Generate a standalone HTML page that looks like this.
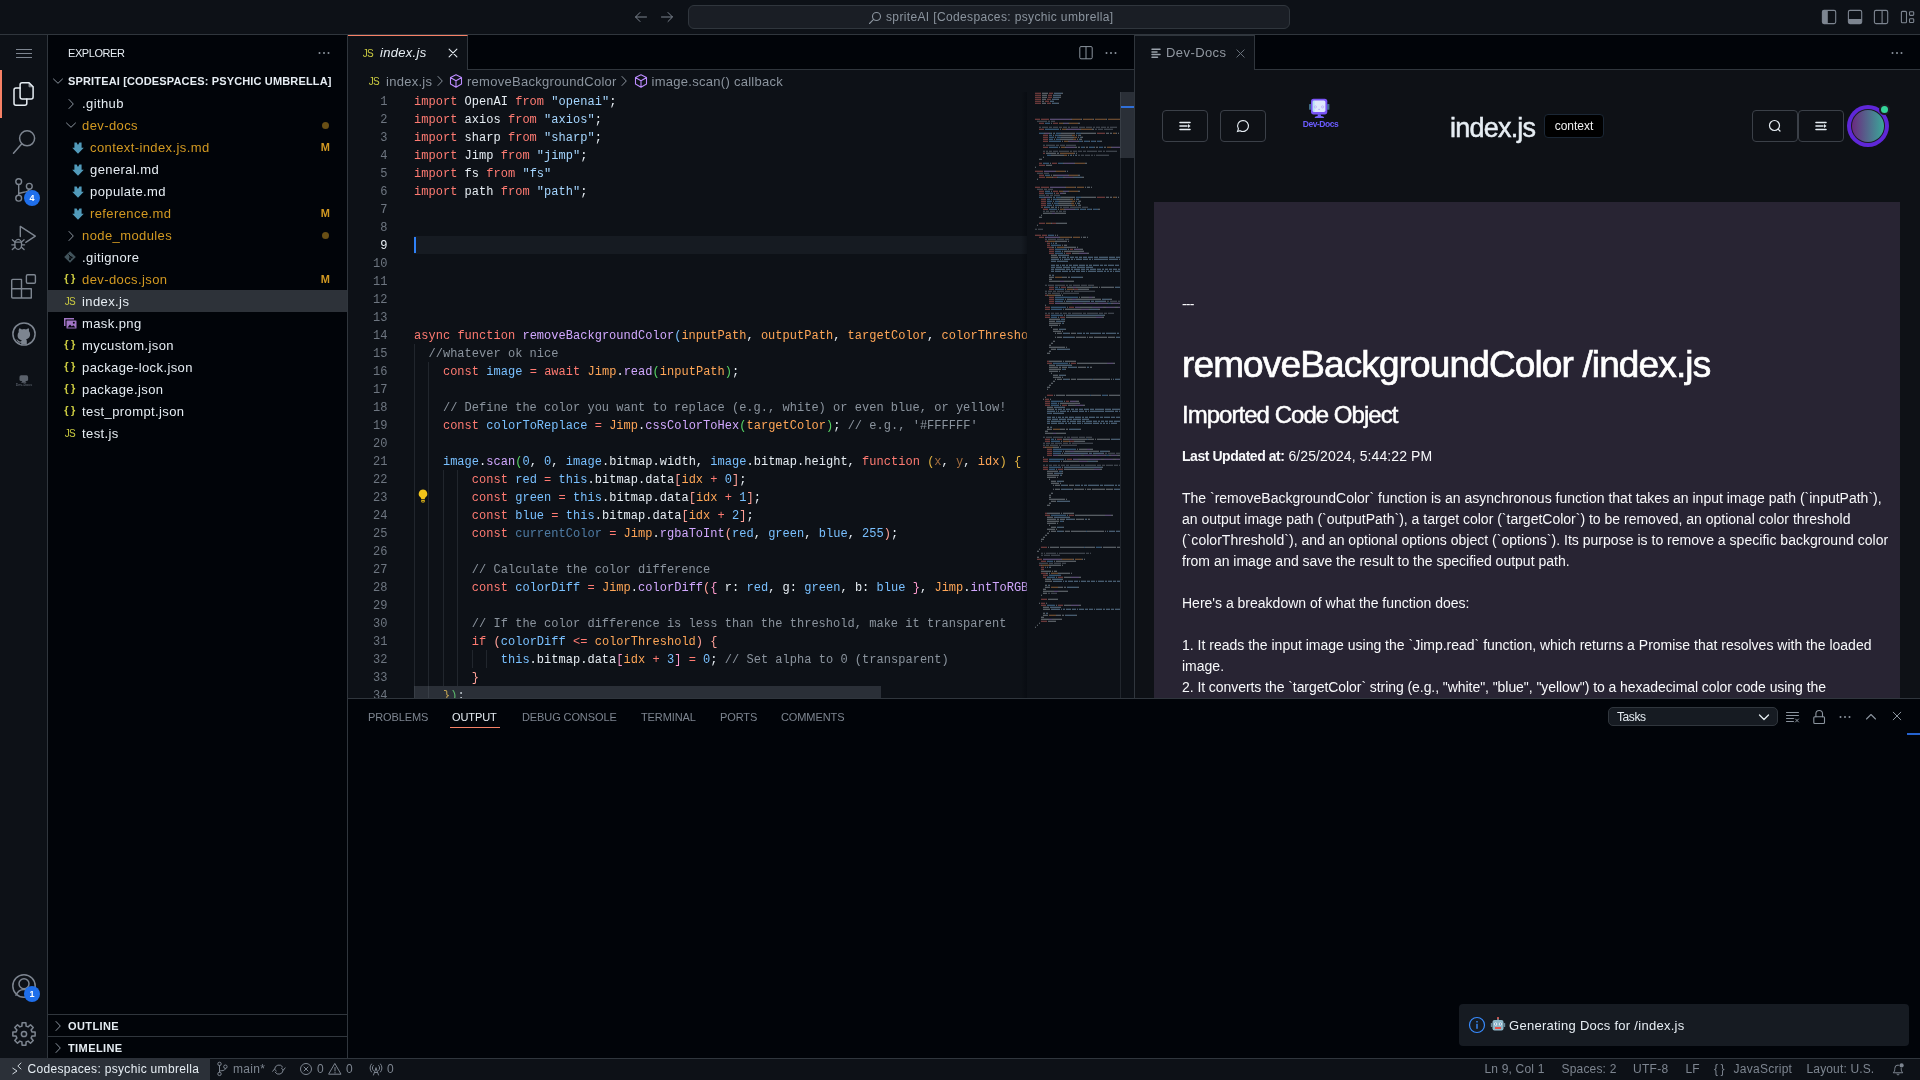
<!DOCTYPE html><html lang="en"><head><meta charset="utf-8"><title>index.js - spriteAI [Codespaces: psychic umbrella]</title><style>
*{box-sizing:border-box;margin:0;padding:0}
html,body{width:1920px;height:1080px;overflow:hidden;background:#0d1117;color:#e6edf3;font-family:"Liberation Sans",sans-serif;font-size:13px;-webkit-font-smoothing:antialiased}
.abs{position:absolute}
#root{position:relative;width:1920px;height:1080px;overflow:hidden;will-change:transform}
svg{display:block;overflow:visible}
/* title */
#title{left:0;top:0;width:1920px;height:35px;background:#0d1117;border-bottom:1px solid #30363d}
#cc{left:688px;top:5px;width:602px;height:24px;border:1px solid #30363d;border-radius:6px;background:#1a1e25}
#cc span{position:absolute;left:197px;top:4px;font-size:12px;letter-spacing:.36px;color:#8b949e;white-space:pre}
/* activity */
#act{left:0;top:35px;width:48px;height:1023px;background:#0d1117;border-right:1px solid #30363d}
.badge{position:absolute;width:16px;height:16px;border-radius:8px;background:#1f6feb;color:#fff;font-size:9px;font-weight:bold;text-align:center;line-height:16px}
/* sidebar */
#side{left:48px;top:35px;width:300px;height:1023px;background:#010409;border-right:1px solid #30363d}
.row{position:absolute;left:0;width:299px;height:22px;line-height:22px;white-space:pre;font-size:13px;letter-spacing:.4px;color:#e6edf3}
.row .t{position:absolute;top:1px}
.row .m{position:absolute;right:17px;top:0;color:#d29922;font-size:11px;font-weight:bold;letter-spacing:0}
.row .dot{position:absolute;left:274px;top:8px;width:7px;height:7px;border-radius:4px;background:#d29922;opacity:.5}
.mod{color:#d29922}
.hdr{font-size:11px;font-weight:bold;letter-spacing:.15px}
.ic{position:absolute}
/* editor */
#tabs{left:348px;top:35px;width:786px;height:35px;background:#010409;border-bottom:1px solid #30363d}
#tab1{left:0;top:0;width:120px;height:35px;background:#0d1117;border-top:1px solid #f78166;border-right:1px solid #30363d}
#tab1 .t{position:absolute;left:32px;top:9px;font-style:italic;font-size:13px;letter-spacing:.3px;white-space:pre}
#bc{left:348px;top:70px;width:786px;height:22px;background:#0d1117;color:#8b949e;font-size:13px;letter-spacing:.28px;line-height:22px;white-space:pre}
#bc span{position:absolute;top:1px}
#ed{left:348px;top:92px;width:786px;height:606px;background:#0d1117;overflow:hidden}
#code{left:66px;top:0;width:613px;height:606px;overflow:hidden}
.ln{position:absolute;left:0;margin-top:1px;width:39.5px;text-align:right;font:12px/18px "Liberation Mono",monospace;color:#6e7681;height:18px}
.cl{position:absolute;left:0;margin-top:1px;letter-spacing:.024px;height:18px;font:12px/18px "Liberation Mono",monospace;white-space:pre;color:#e6edf3}
.k{color:#ff7b72}.s{color:#a5d6ff}.v{color:#79c0ff}.f{color:#d2a8ff}.p{color:#ffa657}.c{color:#8b949e}
.b1{color:#79c0ff}.b2{color:#56d364}.b3{color:#e3b341}.b4{color:#ffa198}.b5{color:#ff9bce}
.dim{opacity:.6}
.g{position:absolute;width:1px;background:#21262d}
/* webview */
#wtabs{left:1135px;top:35px;width:785px;height:35px;background:#010409;border-bottom:1px solid #30363d}
#wtab{left:0;top:0;width:120px;height:35px;background:#0d1117;border-right:1px solid #30363d;border-top:1px solid #30363d}
#wv{left:1135px;top:70px;width:785px;height:628px;background:#0e1116;overflow:hidden}
.btn{position:absolute;height:32px;border:1px solid #3b4048;border-radius:4px}
#card{left:19px;top:132px;width:746px;height:520px;background:#282433}
#card div{position:absolute;left:28px;white-space:pre;color:#f8f9fb}
.body{font-size:14px;line-height:21px}
/* panel */
#panel{left:348px;top:698px;width:1572px;height:360px;background:#010409;border-top:1px solid #30363d}
.pt{position:absolute;top:12px;font-size:11px;color:#7d8590;letter-spacing:-.1px;white-space:pre}
/* status */
#status{left:0;top:1058px;width:1920px;height:22px;background:#0d1117;border-top:1px solid #30363d;color:#7d8590;font-size:12px}
#status .t{position:absolute;top:3px;white-space:pre}
#remote{left:0;top:-1px;width:210px;height:22px;background:#2b3038}

</style></head><body><div id="root">
<div id="title" class="abs">
<svg class="abs" style="left:633px;top:9px" width="16" height="16" viewBox="0 0 16 16" ><path d="M13.5 8H2.8M7 3.5L2.5 8L7 12.5" stroke="#7d8590" stroke-width="1" fill="none" stroke-linecap="round" stroke-linejoin="round" /></svg>
<svg class="abs" style="left:659px;top:9px" width="16" height="16" viewBox="0 0 16 16" ><path d="M2.5 8H13.2M9 3.5L13.5 8L9 12.5" stroke="#7d8590" stroke-width="1" fill="none" stroke-linecap="round" stroke-linejoin="round" /></svg>
<div id="cc" class="abs">
<svg class="abs" style="left:178px;top:4px" width="16" height="16" viewBox="0 0 16 16" ><circle cx="9.5" cy="6.5" r="4" stroke="#8b949e" fill="none" stroke-width="1.1"/><path d="M6.6 9.4L2.5 13.5" stroke="#8b949e" stroke-width="1.1" fill="none" stroke-linecap="round" stroke-linejoin="round" /></svg>
<span>spriteAI [Codespaces: psychic umbrella]</span></div>
<svg class="abs" style="left:1821px;top:9px" width="16" height="16" viewBox="0 0 16 16" ><rect x="1.4" y="1.4" width="13.3" height="13.2" rx="1.6" stroke="#7d8590" fill="none" stroke-width="1.1"/><path d="M1.4 3a1.6 1.6 0 0 1 1.6-1.6h3.8v13.2H3a1.6 1.6 0 0 1-1.6-1.6z" fill="#7d8590"/></svg>
<svg class="abs" style="left:1847px;top:9px" width="16" height="16" viewBox="0 0 16 16" ><rect x="1.4" y="1.4" width="13.3" height="13.2" rx="1.6" stroke="#7d8590" fill="none" stroke-width="1.1"/><path d="M1.4 10h13.3v3a1.6 1.6 0 0 1-1.6 1.6H3a1.6 1.6 0 0 1-1.6-1.6z" fill="#7d8590"/></svg>
<svg class="abs" style="left:1873px;top:9px" width="16" height="16" viewBox="0 0 16 16" ><rect x="1.4" y="1.4" width="13.3" height="13.2" rx="1.6" stroke="#7d8590" fill="none" stroke-width="1.1"/><path d="M9.1 1.4V14.6" stroke="#7d8590" stroke-width="1.1"/></svg>
<svg class="abs" style="left:1899px;top:9px" width="16" height="16" viewBox="0 0 16 16" ><rect x="2.4" y="2.4" width="5.1" height="11.3" rx="1" stroke="#7d8590" fill="none" stroke-width="1.1"/><rect x="10.5" y="2.8" width="4.2" height="3.6" rx=".8" stroke="#7d8590" fill="none" stroke-width="1.1"/><rect x="10.5" y="9.7" width="4.2" height="3.8" rx=".8" stroke="#7d8590" fill="none" stroke-width="1.1"/></svg>
</div>
<div id="act" class="abs"></div>
<div class="abs" style="left:0;top:70px;width:2px;height:48px;background:#f78166"></div>
<svg class="abs" style="left:0px;top:0px" width="48" height="1080" viewBox="0 0 48 1080" ><path d="M16 49.5h16M16 53.5h16M16 57.5h16" stroke="#7d8590" stroke-width="1"/><path d="M22.1 82.7h6.9l4.1 4.1v10.3a2 2 0 0 1-2 2h-9a2 2 0 0 1-2-2v-12.4a2 2 0 0 1 2-2z" stroke="#e6edf3" stroke-width="1.5" fill="none" stroke-linecap="round" stroke-linejoin="round" /><path d="M29 82.7v4.1h4.1z" fill="#e6edf3" opacity=".55" stroke="#e6edf3" stroke-width="1" stroke-linejoin="round"/><path d="M20.1 88h-4.1a2 2 0 0 0-2 2v13.3a2 2 0 0 0 2 2h8.8a2 2 0 0 0 2-2v-4.2" stroke="#e6edf3" stroke-width="1.5" fill="none" stroke-linecap="round" stroke-linejoin="round" /><circle cx="27.1" cy="138.3" r="7.5" stroke="#7d8590" stroke-width="1.5" fill="none"/><path d="M21.6 144L13.5 153.3" stroke="#7d8590" stroke-width="1.5" fill="none" stroke-linecap="round" stroke-linejoin="round" /><circle cx="18.7" cy="181.6" r="2.9" stroke="#7d8590" stroke-width="1.4" fill="none"/><circle cx="29.3" cy="186.3" r="2.9" stroke="#7d8590" stroke-width="1.4" fill="none"/><circle cx="18.7" cy="198.2" r="2.9" stroke="#7d8590" stroke-width="1.4" fill="none"/><path d="M18.7 184.5V195.3M29.3 189.2c0 3.2-6.5 2.6-10.6 4.4" stroke="#7d8590" stroke-width="1.4" fill="none" stroke-linecap="round" stroke-linejoin="round" /><path d="M20.3 236.5V226.4L35.3 236.2L25.8 242.4" stroke="#7d8590" stroke-width="1.4" fill="none" stroke-linecap="round" stroke-linejoin="round" /><ellipse cx="18.2" cy="244.4" rx="3.4" ry="5" stroke="#7d8590" stroke-width="1.4" fill="none"/><path d="M14.8 242.2h6.8M14.9 242l-2.6-2.2M14.8 244.8h-3M14.9 247.2l-2.6 2.4M21.5 242l2.6-2.2M21.6 244.8h3M21.5 247.2l2.6 2.4" stroke="#7d8590" stroke-width="1.3" fill="none" stroke-linecap="round" stroke-linejoin="round" /><path d="M13.7 279.4h7.8v9.3h9.8v9.3h-18.6a1 1 0 0 1-1-1v-16.6a1 1 0 0 1 1-1zM12.7 288.7h8.8v9.3" stroke="#7d8590" stroke-width="1.4" fill="none" stroke-linecap="round" stroke-linejoin="round" /><rect x="26.4" y="274.7" width="9" height="8.6" rx="1.2" stroke="#7d8590" stroke-width="1.4" fill="none"/></svg>
<svg class="abs" style="left:12px;top:322px" width="24" height="24" viewBox="0 0 24 24" ><circle cx="12" cy="12" r="11.1" stroke="#7d8590" stroke-width="1.5" fill="none"/><path d="M 7.3 6.2 c 0.9 0.1 1.9 0.7 2.5 1.2 a 8 8 0 0 1 4.4 0 c 0.6 -0.5 1.6 -1.1 2.5 -1.2 c 0.5 1.2 0.4 2.3 0.2 2.9 c 0.8 0.9 1.2 1.9 1.2 3.1 c 0 3.3 -2 4.5 -4 4.9 c 0.5 0.5 0.7 1.2 0.7 2.1 v 3.1 h -5.6 v -1.6 c -2.5 0.5 -3.4 -0.8 -3.9 -1.9 c -0.3 -0.6 -0.8 -1 -1.3 -1.3 c 0.9 -0.3 1.7 0.2 2.3 1 c 0.7 1 1.7 1.2 2.9 0.8 c 0.1 -0.5 0.3 -0.9 0.6 -1.2 c -2.2 -0.4 -4.2 -1.5 -4.2 -4.9 c 0 -1.2 0.4 -2.2 1.2 -3.1 c -0.2 -0.6 -0.3 -1.7 0.2 -2.9 z" fill="#7d8590"/></svg>
<svg class="abs" style="left:0px;top:0px" width="48" height="1080" viewBox="0 0 48 1080" ><rect x="19.5" y="375.3" width="8.6" height="5.8" rx="1.6" fill="#6e7681" opacity=".8"/><path d="M22.3 381h3l1.2 1.7h-5.4z" fill="#6e7681" opacity=".8"/></svg>
<div class="abs" style="left:12px;top:382px;width:24px;text-align:center;font-size:3.6px;line-height:6px;color:#6e7681;font-weight:bold;opacity:.7">Dev-Docs</div>
<div class="badge" style="left:24px;top:190px">4</div>
<svg class="abs" style="left:0px;top:0px" width="48" height="1080" viewBox="0 0 48 1080" ><circle cx="24" cy="986" r="11.2" stroke="#7d8590" stroke-width="1.5" fill="none"/><circle cx="24" cy="983.8" r="5" stroke="#7d8590" stroke-width="1.5" fill="none"/><path d="M16 995.2c1.5-3.6 4.5-5.8 8-5.8s6.5 2.2 8 5.8" stroke="#7d8590" stroke-width="1.5" fill="none" stroke-linecap="round" stroke-linejoin="round" /><path d="M22.09 1022.86L25.91 1022.86L26.11 1026.08L28.11 1026.91L30.52 1024.77L33.23 1027.48L31.09 1029.89L31.92 1031.89L35.14 1032.09L35.14 1035.91L31.92 1036.11L31.09 1038.11L33.23 1040.52L30.52 1043.23L28.11 1041.09L26.11 1041.92L25.91 1045.14L22.09 1045.14L21.89 1041.92L19.89 1041.09L17.48 1043.23L14.77 1040.52L16.91 1038.11L16.08 1036.11L12.86 1035.91L12.86 1032.09L16.08 1031.89L16.91 1029.89L14.77 1027.48L17.48 1024.77L19.89 1026.91L21.89 1026.08z" stroke="#7d8590" stroke-width="1.5" fill="none" stroke-linecap="round" stroke-linejoin="round" /><circle cx="24" cy="1034" r="2.6" stroke="#7d8590" stroke-width="1.5" fill="none"/></svg>
<div class="badge" style="left:24px;top:986px">1</div>
<div id="side" class="abs">
<div class="abs" style="left:20px;top:12px;font-size:11px;letter-spacing:-.42px;color:#e6edf3">EXPLORER</div>
<svg class="abs" style="left:268px;top:10px" width="16" height="16" viewBox="0 0 16 16" ><circle cx="3.5" cy="8" r="1" fill="#8b949e"/><circle cx="8" cy="8" r="1" fill="#8b949e"/><circle cx="12.5" cy="8" r="1" fill="#8b949e"/></svg>
<div class="row hdr" style="top:35px"><svg class="abs" style="left:2px;top:3px" width="16" height="16" viewBox="0 0 16 16" ><path d="M3.5 6L8 10.3L12.5 6" stroke="#8b949e" stroke-width="1" fill="none" stroke-linecap="round" stroke-linejoin="round" /></svg><span class="t" style="left:20px;top:0">SPRITEAI [CODESPACES: PSYCHIC UMBRELLA]</span></div>
<div class="row" style="top:57px;"><svg class="abs" style="left:15.3px;top:3.7px" width="16" height="16" viewBox="0 0 16 16" ><path d="M6 3.5L10.3 8L6 12.5" stroke="#8b949e" stroke-width="1" fill="none" stroke-linecap="round" stroke-linejoin="round" /></svg><span class="t " style="left:34px">.github</span></div>
<div class="row" style="top:79px;"><svg class="abs" style="left:15.2px;top:3px" width="16" height="16" viewBox="0 0 16 16" ><path d="M3.5 6L8 10.3L12.5 6" stroke="#8b949e" stroke-width="1" fill="none" stroke-linecap="round" stroke-linejoin="round" /></svg><span class="t mod" style="left:34px">dev-docs</span><span class="dot"></span></div>
<div class="row" style="top:101px;"><svg class="abs" style="left:22.2px;top:3.6px" width="16" height="16" viewBox="0 0 16 16" ><path d="M4.4 2.5h2.2l1.4 2.4 1.4-2.4h2.2v5.2h2.2L8 13.8 2.2 7.7h2.2z" fill="#519aba"/></svg><span class="t mod" style="left:42px">context-index.js.md</span><span class="m">M</span></div>
<div class="row" style="top:123px;"><svg class="abs" style="left:22.2px;top:3.6px" width="16" height="16" viewBox="0 0 16 16" ><path d="M4.4 2.5h2.2l1.4 2.4 1.4-2.4h2.2v5.2h2.2L8 13.8 2.2 7.7h2.2z" fill="#519aba"/></svg><span class="t " style="left:42px">general.md</span></div>
<div class="row" style="top:145px;"><svg class="abs" style="left:22.2px;top:3.6px" width="16" height="16" viewBox="0 0 16 16" ><path d="M4.4 2.5h2.2l1.4 2.4 1.4-2.4h2.2v5.2h2.2L8 13.8 2.2 7.7h2.2z" fill="#519aba"/></svg><span class="t " style="left:42px">populate.md</span></div>
<div class="row" style="top:167px;"><svg class="abs" style="left:22.2px;top:3.6px" width="16" height="16" viewBox="0 0 16 16" ><path d="M4.4 2.5h2.2l1.4 2.4 1.4-2.4h2.2v5.2h2.2L8 13.8 2.2 7.7h2.2z" fill="#519aba"/></svg><span class="t mod" style="left:42px">reference.md</span><span class="m">M</span></div>
<div class="row" style="top:189px;"><svg class="abs" style="left:15.3px;top:3.7px" width="16" height="16" viewBox="0 0 16 16" ><path d="M6 3.5L10.3 8L6 12.5" stroke="#8b949e" stroke-width="1" fill="none" stroke-linecap="round" stroke-linejoin="round" /></svg><span class="t mod" style="left:34px">node_modules</span><span class="dot"></span></div>
<div class="row" style="top:211px;"><svg class="abs" style="left:13.8px;top:2.7px" width="16" height="16" viewBox="0 0 16 16" ><path d="M8 2.2L13.8 8L8 13.8L2.2 8z" fill="#41535b"/><path d="M6.5 5.5l2.8 2.8M8 7v3" stroke="#010409" stroke-width="1"/><circle cx="8" cy="10.2" r="1" fill="#010409"/><circle cx="9.6" cy="8.4" r="1" fill="#010409"/></svg><span class="t " style="left:34px">.gitignore</span></div>
<div class="row" style="top:233px;"><span class="abs" style="left:16.2px;top:3px;font:bold 11px/15px 'Liberation Sans',sans-serif;color:#cbcb41;letter-spacing:2.6px;width:16px;height:16px">{}</span><span class="t mod" style="left:34px">dev-docs.json</span><span class="m">M</span></div>
<div class="row" style="top:255px;background:#2d3239;"><span class="abs" style="left:16.8px;top:4px;font:10px/16px 'Liberation Sans',sans-serif;color:#cbcb41;letter-spacing:-.8px;width:16px;height:16px">JS</span><span class="t " style="left:34px">index.js</span></div>
<div class="row" style="top:277px;"><svg class="abs" style="left:13.7px;top:2.7px" width="16" height="16" viewBox="0 0 16 16" ><path d="M2 3h10v1.5H3.5V11H2z" fill="#a074c4"/><rect x="4.5" y="5.5" width="10" height="8" rx=".5" fill="#a074c4"/><path d="M5.5 12.5l2.5-3 1.8 2 1.5-1.2 2.2 2.2z" fill="#010409"/><circle cx="11.8" cy="7.8" r="1" fill="#010409"/></svg><span class="t " style="left:34px">mask.png</span></div>
<div class="row" style="top:299px;"><span class="abs" style="left:16.2px;top:3px;font:bold 11px/15px 'Liberation Sans',sans-serif;color:#cbcb41;letter-spacing:2.6px;width:16px;height:16px">{}</span><span class="t " style="left:34px">mycustom.json</span></div>
<div class="row" style="top:321px;"><span class="abs" style="left:16.2px;top:3px;font:bold 11px/15px 'Liberation Sans',sans-serif;color:#cbcb41;letter-spacing:2.6px;width:16px;height:16px">{}</span><span class="t " style="left:34px">package-lock.json</span></div>
<div class="row" style="top:343px;"><span class="abs" style="left:16.2px;top:3px;font:bold 11px/15px 'Liberation Sans',sans-serif;color:#cbcb41;letter-spacing:2.6px;width:16px;height:16px">{}</span><span class="t " style="left:34px">package.json</span></div>
<div class="row" style="top:365px;"><span class="abs" style="left:16.2px;top:3px;font:bold 11px/15px 'Liberation Sans',sans-serif;color:#cbcb41;letter-spacing:2.6px;width:16px;height:16px">{}</span><span class="t " style="left:34px">test_prompt.json</span></div>
<div class="row" style="top:387px;"><span class="abs" style="left:16.8px;top:4px;font:10px/16px 'Liberation Sans',sans-serif;color:#cbcb41;letter-spacing:-.8px;width:16px;height:16px">JS</span><span class="t " style="left:34px">test.js</span></div>
<div class="abs" style="left:0;top:979px;width:299px;height:1px;background:#30363d"></div>
<div class="row hdr" style="top:980px"><svg class="abs" style="left:2px;top:3px" width="16" height="16" viewBox="0 0 16 16" ><path d="M6 3.5L10.3 8L6 12.5" stroke="#8b949e" stroke-width="1" fill="none" stroke-linecap="round" stroke-linejoin="round" /></svg><span class="t" style="left:20px;top:0;letter-spacing:.4px">OUTLINE</span></div>
<div class="abs" style="left:0;top:1001px;width:299px;height:1px;background:#30363d"></div>
<div class="row hdr" style="top:1002px"><svg class="abs" style="left:2px;top:3px" width="16" height="16" viewBox="0 0 16 16" ><path d="M6 3.5L10.3 8L6 12.5" stroke="#8b949e" stroke-width="1" fill="none" stroke-linecap="round" stroke-linejoin="round" /></svg><span class="t" style="left:20px;top:0;letter-spacing:.4px">TIMELINE</span></div>
</div>
<div id="tabs" class="abs"><div id="tab1" class="abs">
<span class="abs" style="left:14.8px;top:10px;font:10px/16px 'Liberation Sans',sans-serif;color:#cbcb41;letter-spacing:-.8px;width:16px;height:16px">JS</span>
<span class="t">index.js</span>
<svg class="abs" style="left:97px;top:9px" width="16" height="16" viewBox="0 0 16 16" ><path d="M4.1 4.1L11.9 11.9M11.9 4.1L4.1 11.9" stroke="#e6edf3" stroke-width="1.1" fill="none" stroke-linecap="round" stroke-linejoin="round" /></svg>
</div>
<svg class="abs" style="left:729.5px;top:10px" width="16" height="16" viewBox="0 0 16 16" ><rect x="1.8" y="1.6" width="12.4" height="12.2" rx="1.2" stroke="#8b949e" fill="none"/><path d="M8 1.6V13.8" stroke="#8b949e"/></svg>
<svg class="abs" style="left:755px;top:10px" width="16" height="16" viewBox="0 0 16 16" ><circle cx="3.5" cy="8" r="1" fill="#8b949e"/><circle cx="8" cy="8" r="1" fill="#8b949e"/><circle cx="12.5" cy="8" r="1" fill="#8b949e"/></svg>
</div>
<div id="bc" class="abs">
<span class="abs" style="left:20.8px;top:4px;font:10px/16px 'Liberation Sans',sans-serif;color:#cbcb41;letter-spacing:-.8px;width:16px;height:16px">JS</span>
<span style="left:38px">index.js</span>
<svg class="abs" style="left:84px;top:3px" width="16" height="16" viewBox="0 0 16 16" ><path d="M6 3.5L10.3 8L6 12.5" stroke="#8b949e" stroke-width="1" fill="none" stroke-linecap="round" stroke-linejoin="round" /></svg>
<svg class="abs" style="left:100px;top:3px" width="16" height="16" viewBox="0 0 16 16" ><path d="M8 1.8L13.5 4.6V11L8 14.2L2.5 11V4.6zM2.7 4.8L8 7.8L13.3 4.8M8 7.8V14" stroke="#bc8cff" stroke-width="1.1" fill="none" stroke-linecap="round" stroke-linejoin="round" /></svg>
<span style="left:119px">removeBackgroundColor</span>
<svg class="abs" style="left:268px;top:3px" width="16" height="16" viewBox="0 0 16 16" ><path d="M6 3.5L10.3 8L6 12.5" stroke="#8b949e" stroke-width="1" fill="none" stroke-linecap="round" stroke-linejoin="round" /></svg>
<svg class="abs" style="left:285px;top:3px" width="16" height="16" viewBox="0 0 16 16" ><path d="M8 1.8L13.5 4.6V11L8 14.2L2.5 11V4.6zM2.7 4.8L8 7.8L13.3 4.8M8 7.8V14" stroke="#bc8cff" stroke-width="1.1" fill="none" stroke-linecap="round" stroke-linejoin="round" /></svg>
<span style="left:303.5px">image.scan() callback</span>
</div>
<div id="ed" class="abs">
<div class="abs" style="left:66px;top:144px;width:613px;height:18px;background:#161b22"></div>
<div class="abs" style="left:66px;top:145px;width:2px;height:16px;background:#2f81f7"></div>
<div class="ln" style="top:0px;">1</div>
<div class="ln" style="top:18px;">2</div>
<div class="ln" style="top:36px;">3</div>
<div class="ln" style="top:54px;">4</div>
<div class="ln" style="top:72px;">5</div>
<div class="ln" style="top:90px;">6</div>
<div class="ln" style="top:108px;">7</div>
<div class="ln" style="top:126px;">8</div>
<div class="ln" style="top:144px;color:#e6edf3">9</div>
<div class="ln" style="top:162px;">10</div>
<div class="ln" style="top:180px;">11</div>
<div class="ln" style="top:198px;">12</div>
<div class="ln" style="top:216px;">13</div>
<div class="ln" style="top:234px;">14</div>
<div class="ln" style="top:252px;">15</div>
<div class="ln" style="top:270px;">16</div>
<div class="ln" style="top:288px;">17</div>
<div class="ln" style="top:306px;">18</div>
<div class="ln" style="top:324px;">19</div>
<div class="ln" style="top:342px;">20</div>
<div class="ln" style="top:360px;">21</div>
<div class="ln" style="top:378px;">22</div>
<div class="ln" style="top:396px;">23</div>
<div class="ln" style="top:414px;">24</div>
<div class="ln" style="top:432px;">25</div>
<div class="ln" style="top:450px;">26</div>
<div class="ln" style="top:468px;">27</div>
<div class="ln" style="top:486px;">28</div>
<div class="ln" style="top:504px;">29</div>
<div class="ln" style="top:522px;">30</div>
<div class="ln" style="top:540px;">31</div>
<div class="ln" style="top:558px;">32</div>
<div class="ln" style="top:576px;">33</div>
<div class="ln" style="top:594px;">34</div>
<div id="code" class="abs">
<div class="g" style="left:0.0px;top:252px;height:18px"></div>
<div class="g" style="left:0.0px;top:270px;height:18px"></div>
<div class="g" style="left:14.4px;top:270px;height:18px"></div>
<div class="g" style="left:0.0px;top:288px;height:18px"></div>
<div class="g" style="left:14.4px;top:288px;height:18px"></div>
<div class="g" style="left:0.0px;top:306px;height:18px"></div>
<div class="g" style="left:14.4px;top:306px;height:18px"></div>
<div class="g" style="left:0.0px;top:324px;height:18px"></div>
<div class="g" style="left:14.4px;top:324px;height:18px"></div>
<div class="g" style="left:0.0px;top:342px;height:18px"></div>
<div class="g" style="left:14.4px;top:342px;height:18px"></div>
<div class="g" style="left:0.0px;top:360px;height:18px"></div>
<div class="g" style="left:14.4px;top:360px;height:18px"></div>
<div class="g" style="left:0.0px;top:378px;height:18px"></div>
<div class="g" style="left:14.4px;top:378px;height:18px"></div>
<div class="g" style="left:28.8px;top:378px;height:18px"></div>
<div class="g" style="left:43.2px;top:378px;height:18px"></div>
<div class="g" style="left:0.0px;top:396px;height:18px"></div>
<div class="g" style="left:14.4px;top:396px;height:18px"></div>
<div class="g" style="left:28.8px;top:396px;height:18px"></div>
<div class="g" style="left:43.2px;top:396px;height:18px"></div>
<div class="g" style="left:0.0px;top:414px;height:18px"></div>
<div class="g" style="left:14.4px;top:414px;height:18px"></div>
<div class="g" style="left:28.8px;top:414px;height:18px"></div>
<div class="g" style="left:43.2px;top:414px;height:18px"></div>
<div class="g" style="left:0.0px;top:432px;height:18px"></div>
<div class="g" style="left:14.4px;top:432px;height:18px"></div>
<div class="g" style="left:28.8px;top:432px;height:18px"></div>
<div class="g" style="left:43.2px;top:432px;height:18px"></div>
<div class="g" style="left:0.0px;top:450px;height:18px"></div>
<div class="g" style="left:14.4px;top:450px;height:18px"></div>
<div class="g" style="left:28.8px;top:450px;height:18px"></div>
<div class="g" style="left:43.2px;top:450px;height:18px"></div>
<div class="g" style="left:0.0px;top:468px;height:18px"></div>
<div class="g" style="left:14.4px;top:468px;height:18px"></div>
<div class="g" style="left:28.8px;top:468px;height:18px"></div>
<div class="g" style="left:43.2px;top:468px;height:18px"></div>
<div class="g" style="left:0.0px;top:486px;height:18px"></div>
<div class="g" style="left:14.4px;top:486px;height:18px"></div>
<div class="g" style="left:28.8px;top:486px;height:18px"></div>
<div class="g" style="left:43.2px;top:486px;height:18px"></div>
<div class="g" style="left:0.0px;top:504px;height:18px"></div>
<div class="g" style="left:14.4px;top:504px;height:18px"></div>
<div class="g" style="left:28.8px;top:504px;height:18px"></div>
<div class="g" style="left:43.2px;top:504px;height:18px"></div>
<div class="g" style="left:0.0px;top:522px;height:18px"></div>
<div class="g" style="left:14.4px;top:522px;height:18px"></div>
<div class="g" style="left:28.8px;top:522px;height:18px"></div>
<div class="g" style="left:43.2px;top:522px;height:18px"></div>
<div class="g" style="left:0.0px;top:540px;height:18px"></div>
<div class="g" style="left:14.4px;top:540px;height:18px"></div>
<div class="g" style="left:28.8px;top:540px;height:18px"></div>
<div class="g" style="left:43.2px;top:540px;height:18px"></div>
<div class="g" style="left:0.0px;top:558px;height:18px"></div>
<div class="g" style="left:14.4px;top:558px;height:18px"></div>
<div class="g" style="left:28.8px;top:558px;height:18px"></div>
<div class="g" style="left:43.2px;top:558px;height:18px"></div>
<div class="g" style="left:57.6px;top:558px;height:18px"></div>
<div class="g" style="left:72.0px;top:558px;height:18px"></div>
<div class="g" style="left:0.0px;top:576px;height:18px"></div>
<div class="g" style="left:14.4px;top:576px;height:18px"></div>
<div class="g" style="left:28.8px;top:576px;height:18px"></div>
<div class="g" style="left:43.2px;top:576px;height:18px"></div>
<div class="g" style="left:0.0px;top:594px;height:18px"></div>
<div class="g" style="left:14.4px;top:594px;height:18px"></div>
<div class="cl" style="top:0px"><span class="k">import</span> OpenAI <span class="k">from</span> <span class="s">&quot;openai&quot;</span>;</div>
<div class="cl" style="top:18px"><span class="k">import</span> axios <span class="k">from</span> <span class="s">&quot;axios&quot;</span>;</div>
<div class="cl" style="top:36px"><span class="k">import</span> sharp <span class="k">from</span> <span class="s">&quot;sharp&quot;</span>;</div>
<div class="cl" style="top:54px"><span class="k">import</span> Jimp <span class="k">from</span> <span class="s">&quot;jimp&quot;</span>;</div>
<div class="cl" style="top:72px"><span class="k">import</span> fs <span class="k">from</span> <span class="s">&quot;fs&quot;</span></div>
<div class="cl" style="top:90px"><span class="k">import</span> path <span class="k">from</span> <span class="s">&quot;path&quot;</span>;</div>
<div class="cl" style="top:234px"><span class="k">async</span> <span class="k">function</span> <span class="f">removeBackgroundColor</span><span class="b1">(</span><span class="p">inputPath</span>, <span class="p">outputPath</span>, <span class="p">targetColor</span>, <span class="p">colorThreshold</span> = 0, <span class="p">options</span> = <span class="b2">{}</span><span class="b1">)</span> <span class="b1">{</span></div>
<div class="cl" style="top:252px">  <span class="c">//whatever ok nice</span></div>
<div class="cl" style="top:270px">    <span class="k">const</span> <span class="v">image</span> <span class="k">=</span> <span class="k">await</span> <span class="p">Jimp</span>.<span class="f">read</span><span class="b2">(</span><span class="p">inputPath</span><span class="b2">)</span>;</div>
<div class="cl" style="top:306px">    <span class="c">// Define the color you want to replace (e.g., white) or even blue, or yellow!</span></div>
<div class="cl" style="top:324px">    <span class="k">const</span> <span class="v">colorToReplace</span> <span class="k">=</span> <span class="p">Jimp</span>.<span class="f">cssColorToHex</span><span class="b2">(</span><span class="p">targetColor</span><span class="b2">)</span>; <span class="c">// e.g., &#x27;#FFFFFF&#x27;</span></div>
<div class="cl" style="top:360px">    <span class="v">image</span>.<span class="f">scan</span><span class="b2">(</span><span class="v">0</span>, <span class="v">0</span>, <span class="v">image</span>.bitmap.width, <span class="v">image</span>.bitmap.height, <span class="k">function</span> <span class="b3">(</span><span class="p dim">x</span>, <span class="p dim">y</span>, <span class="p">idx</span><span class="b3">)</span> <span class="b3">{</span></div>
<div class="cl" style="top:378px">        <span class="k">const</span> <span class="v">red</span> <span class="k">=</span> <span class="v">this</span>.bitmap.data<span class="b4">[</span><span class="p">idx</span> <span class="k">+</span> <span class="v">0</span><span class="b4">]</span>;</div>
<div class="cl" style="top:396px">        <span class="k">const</span> <span class="v">green</span> <span class="k">=</span> <span class="v">this</span>.bitmap.data<span class="b4">[</span><span class="p">idx</span> <span class="k">+</span> <span class="v">1</span><span class="b4">]</span>;</div>
<div class="cl" style="top:414px">        <span class="k">const</span> <span class="v">blue</span> <span class="k">=</span> <span class="v">this</span>.bitmap.data<span class="b4">[</span><span class="p">idx</span> <span class="k">+</span> <span class="v">2</span><span class="b4">]</span>;</div>
<div class="cl" style="top:432px">        <span class="k">const</span> <span class="v dim">currentColor</span> <span class="k">=</span> <span class="p">Jimp</span>.<span class="f">rgbaToInt</span><span class="b4">(</span><span class="v">red</span>, <span class="v">green</span>, <span class="v">blue</span>, <span class="v">255</span><span class="b4">)</span>;</div>
<div class="cl" style="top:468px">        <span class="c">// Calculate the color difference</span></div>
<div class="cl" style="top:486px">        <span class="k">const</span> <span class="v">colorDiff</span> <span class="k">=</span> <span class="p">Jimp</span>.<span class="f">colorDiff</span><span class="b4">(</span><span class="b5">{</span> r: <span class="v">red</span>, g: <span class="v">green</span>, b: <span class="v">blue</span> <span class="b5">}</span>, <span class="p">Jimp</span>.<span class="f">intToRGBA</span><span class="b5">(</span><span class="v">colorToReplace</span><span class="b5">)</span><span class="b4">)</span>;</div>
<div class="cl" style="top:522px">        <span class="c">// If the color difference is less than the threshold, make it transparent</span></div>
<div class="cl" style="top:540px">        <span class="k">if</span> <span class="b4">(</span><span class="v">colorDiff</span> <span class="k">&lt;=</span> <span class="p">colorThreshold</span><span class="b4">)</span> <span class="b4">{</span></div>
<div class="cl" style="top:558px">            <span class="v">this</span>.bitmap.data<span class="b5">[</span><span class="p">idx</span> <span class="k">+</span> <span class="v">3</span><span class="b5">]</span> <span class="k">=</span> <span class="v">0</span>; <span class="c">// Set alpha to 0 (transparent)</span></div>
<div class="cl" style="top:576px">        <span class="b4">}</span></div>
<div class="cl" style="top:594px">    <span class="b3">}</span><span class="b2">)</span>;</div>
</div>
<svg class="abs" style="left:66.7px;top:396px" width="16" height="16" viewBox="0 0 16 16" ><path d="M8 1.5a4.3 4.3 0 0 0-2.6 7.7c.5.5.8 1 .8 1.6v.4h3.6v-.4c0-.6.3-1.1.8-1.6A4.3 4.3 0 0 0 8 1.5z" fill="#f2c41a"/><path d="M6.3 12h3.4v1.6a1 1 0 0 1-1 1H7.3a1 1 0 0 1-1-1z" fill="#f2c41a"/><rect x="7.3" y="12.8" width="1.4" height="1" fill="#0d1117"/></svg>
<div class="abs" style="left:66px;top:594px;width:467px;height:12px;background:#6e7681;opacity:.3"></div>
<div class="abs" style="left:679px;top:0;width:93px;height:606px;background:#0d1117"></div>
<div class="abs" style="left:673px;top:0;width:6px;height:606px;background:linear-gradient(90deg,rgba(1,4,9,0),rgba(1,4,9,.35))"></div>
<svg class="abs" style="left:686.5px;top:0;opacity:.5" width="86" height="606" viewBox="0 0 86 606"><path d="M0 1.2h6M14 1.2h4M0 3.2h6M13 3.2h4M0 5.2h6M13 5.2h4M0 7.2h6M12 7.2h4M0 9.2h6M10 9.2h4M0 11.2h6M12 11.2h4M0 27.2h5M6 27.2h8M4 31.2h5M18 31.2h5M4 37.2h5M62 41.2h8M8 43.2h5M8 45.2h5M8 47.2h5M8 49.2h5M8 55.2h5M8 61.2h2M4 71.2h3M17 71.2h5M4 73.2h6M0 79.2h8M4 83.2h5M4 85.2h6M18 85.2h4M0 95.2h5M6 95.2h8M4 99.2h5M18 99.2h5M4 101.2h5M21 101.2h3M62 105.2h8M6 107.2h5M6 109.2h5M6 111.2h5M6 113.2h5M6 115.2h2M8 117.2h5M4 131.2h6M17 131.2h4M0 143.2h6M7 143.2h5M4 145.2h5M10 149.2h2M12 151.2h3M12 153.2h3M12 155.2h5M14 157.2h5M35 157.2h3M14 159.2h5M14 161.2h5M31 161.2h5M14 195.2h5M26 195.2h5M14 197.2h5M39 197.2h4M10 203.2h2M14 205.2h5M14 207.2h5M14 209.2h5M14 211.2h5M10 215.2h5M34 215.2h5M10 217.2h5M10 223.2h5M10 225.2h5M25 225.2h5M12 269.2h2M12 271.2h5M36 271.2h5M12 303.2h6M10 307.2h4M10 309.2h5M31 309.2h3M10 311.2h5M10 313.2h5M27 313.2h5M10 347.2h5M22 347.2h5M10 349.2h5M35 349.2h4M8 355.2h2M12 357.2h5M12 359.2h5M12 361.2h5M12 363.2h5M8 367.2h5M32 367.2h5M8 369.2h5M8 375.2h5M8 377.2h5M23 377.2h5M10 421.2h2M10 423.2h5M34 423.2h5M6 455.2h6M2 467.2h5M6 469.2h5M4 473.2h2M6 475.2h3M6 477.2h3M6 481.2h5M8 483.2h5M8 485.2h3M23 485.2h5M6 507.2h6M6 511.2h4M6 513.2h5M23 513.2h5M6 529.2h6" stroke="#ff7b72" stroke-width="1.1" fill="none"/><path d="M19 1.2h8M18 3.2h7M18 5.2h7M17 7.2h6M15 9.2h4M17 11.2h6M39 85.2h8M23 163.2h10M24 165.2h2M27 165.2h4M32 165.2h2M35 165.2h4M40 165.2h3M44 165.2h3M48 165.2h4M53 165.2h5M59 165.2h4M64 165.2h9M74 165.2h6M81 165.2h5M16 167.2h8M25 167.2h1M27 167.2h1M29 167.2h6M36 167.2h2M39 167.2h1M41 167.2h6M48 167.2h5M54 167.2h2M57 167.2h1M59 167.2h1M60 167.2h1M61 167.2h11M72 167.2h1M74 167.2h9M84 167.2h2M16 169.2h5M22 169.2h11M16 173.2h4M21 173.2h3M25 173.2h1M27 173.2h3M31 173.2h2M34 173.2h3M38 173.2h5M44 173.2h6M51 173.2h2M54 173.2h3M58 173.2h6M65 173.2h3M69 173.2h3M73 173.2h6M80 173.2h4M85 173.2h1M16 175.2h4M21 175.2h6M28 175.2h7M36 175.2h5M42 175.2h8M51 175.2h7M16 177.2h3M20 177.2h10M31 177.2h4M36 177.2h2M39 177.2h5M44 177.2h1M46 177.2h4M51 177.2h3M55 177.2h6M62 177.2h4M67 177.2h2M70 177.2h3M74 177.2h3M78 177.2h4M83 177.2h3M16 179.2h3M20 179.2h6M27 179.2h6M34 179.2h2M37 179.2h3M41 179.2h4M46 179.2h4M51 179.2h1M53 179.2h8M62 179.2h5M67 179.2h1M69 179.2h2M72 179.2h2M75 179.2h2M78 179.2h1M80 179.2h6M36 185.2h11M80 195.2h6M67 207.2h8M31 209.2h24M56 209.2h3M60 209.2h10M55 217.2h8M31 223.2h38M21 229.2h8M24 237.2h6M28 241.2h6M42 241.2h5M48 241.2h2M51 241.2h3M55 241.2h11M67 241.2h3M71 241.2h10M82 241.2h2M85 241.2h1M28 245.2h11M81 245.2h5M22 257.2h13M21 273.2h15M33 275.2h8M52 275.2h2M24 283.2h6M28 287.2h6M78 287.2h1M80 287.2h6M19 315.2h10M20 317.2h2M23 317.2h4M28 317.2h2M31 317.2h4M36 317.2h3M40 317.2h3M44 317.2h4M49 317.2h5M55 317.2h4M60 317.2h9M70 317.2h6M77 317.2h8M12 319.2h8M21 319.2h1M23 319.2h1M25 319.2h6M32 319.2h2M35 319.2h1M37 319.2h6M44 319.2h5M50 319.2h2M53 319.2h1M55 319.2h1M56 319.2h1M57 319.2h11M68 319.2h1M70 319.2h9M80 319.2h3M84 319.2h2M12 321.2h5M18 321.2h11M12 325.2h4M17 325.2h3M21 325.2h1M23 325.2h3M27 325.2h2M30 325.2h3M34 325.2h5M40 325.2h6M47 325.2h2M50 325.2h3M54 325.2h6M61 325.2h3M65 325.2h3M69 325.2h6M76 325.2h4M81 325.2h4M12 327.2h4M17 327.2h6M24 327.2h7M32 327.2h5M38 327.2h8M47 327.2h7M12 329.2h3M16 329.2h10M27 329.2h4M32 329.2h2M35 329.2h5M40 329.2h1M42 329.2h4M47 329.2h3M51 329.2h6M58 329.2h4M63 329.2h2M66 329.2h3M70 329.2h3M74 329.2h4M79 329.2h5M84 329.2h1M12 331.2h3M16 331.2h6M23 331.2h6M30 331.2h2M33 331.2h3M37 331.2h4M42 331.2h4M47 331.2h1M49 331.2h8M58 331.2h5M63 331.2h1M65 331.2h2M68 331.2h2M71 331.2h2M74 331.2h1M76 331.2h6M34 337.2h11M76 347.2h10M65 359.2h8M29 361.2h24M54 361.2h3M58 361.2h10M53 369.2h8M29 375.2h38M19 381.2h8M22 389.2h6M26 393.2h6M40 393.2h5M46 393.2h2M49 393.2h3M53 393.2h11M65 393.2h3M69 393.2h10M80 393.2h2M83 393.2h3M26 397.2h11M79 397.2h6M22 409.2h13M19 425.2h15M31 427.2h8M50 427.2h2M22 435.2h6M22 439.2h6M72 439.2h1M74 439.2h6M81 439.2h4M17 487.2h10M18 489.2h9M28 489.2h1M30 489.2h2M33 489.2h5M39 489.2h4M44 489.2h1M46 489.2h5M52 489.2h3M56 489.2h4M61 489.2h1M63 489.2h6M70 489.2h2M73 489.2h4M78 489.2h3M82 489.2h4M32 495.2h11M15 515.2h10M16 517.2h9M26 517.2h1M28 517.2h2M31 517.2h5M37 517.2h4M42 517.2h1M44 517.2h5M50 517.2h3M54 517.2h4M59 517.2h1M61 517.2h6M68 517.2h2M71 517.2h4M76 517.2h3M80 517.2h6M30 523.2h11" stroke="#a5d6ff" stroke-width="1.1" fill="none"/><path d="M10 31.2h5M10 37.2h14M4 41.2h5M15 41.2h1M18 41.2h1M21 41.2h5M41 41.2h5M14 43.2h3M20 43.2h4M43 43.2h1M14 45.2h5M22 45.2h4M45 45.2h1M14 47.2h4M21 47.2h4M44 47.2h1M14 49.2h12M44 49.2h3M49 49.2h5M56 49.2h4M62 49.2h3M14 55.2h9M46 55.2h3M54 55.2h5M64 55.2h4M12 63.2h4M35 63.2h1M40 63.2h1M8 71.2h6M23 71.2h5M10 83.2h5M23 85.2h5M10 99.2h5M10 101.2h8M4 105.2h5M15 105.2h1M18 105.2h1M21 105.2h5M41 105.2h5M12 107.2h3M18 107.2h4M41 107.2h1M12 109.2h5M20 109.2h4M43 109.2h1M12 111.2h4M19 111.2h4M42 111.2h1M12 113.2h5M20 113.2h4M43 113.2h1M10 115.2h5M20 115.2h1M14 117.2h8M40 117.2h3M45 117.2h5M52 117.2h4M58 117.2h5M13 143.2h6M16 151.2h1M20 151.2h1M16 153.2h10M20 157.2h12M20 159.2h6M20 161.2h8M17 183.2h1M20 195.2h3M56 195.2h1M20 197.2h9M20 205.2h23M20 207.2h9M20 209.2h8M73 211.2h3M16 215.2h15M16 217.2h11M16 223.2h12M16 225.2h6M26 227.2h3M27 231.2h1M18 271.2h15M27 277.2h3M57 287.2h1M55 303.2h1M67 303.2h5M16 309.2h12M16 311.2h6M16 313.2h8M15 335.2h1M16 347.2h3M52 347.2h1M16 349.2h9M18 357.2h23M18 359.2h9M18 361.2h8M71 363.2h3M14 367.2h15M14 369.2h11M14 375.2h12M14 377.2h6M24 379.2h3M25 383.2h1M16 423.2h15M25 429.2h3M51 439.2h1M49 455.2h1M61 455.2h5M12 469.2h6M10 475.2h1M14 475.2h1M14 483.2h12M12 485.2h8M13 493.2h1M12 513.2h8M11 521.2h1" stroke="#79c0ff" stroke-width="1.1" fill="none"/><path d="M15 27.2h21M29 31.2h4M32 37.2h13M10 41.2h4M34 49.2h9M31 55.2h9M77 55.2h9M29 71.2h10M9 79.2h11M21 83.2h12M30 85.2h8M15 95.2h15M29 99.2h4M25 101.2h3M10 105.2h4M30 117.2h9M17 121.2h3M10 145.2h14M39 157.2h6M44 161.2h8M25 189.2h4M38 195.2h3M54 205.2h3M37 207.2h4M20 211.2h5M37 211.2h11M51 211.2h9M63 211.2h9M78 211.2h6M40 215.2h5M57 215.2h11M71 215.2h9M83 215.2h3M46 217.2h8M61 225.2h6M72 271.2h6M35 309.2h6M40 313.2h8M18 341.2h3M34 347.2h3M52 357.2h3M35 359.2h4M18 363.2h5M35 363.2h11M49 363.2h9M61 363.2h9M76 363.2h6M38 367.2h5M55 367.2h11M69 367.2h9M81 367.2h5M44 369.2h8M59 377.2h6M70 423.2h6M8 467.2h18M36 485.2h8M19 499.2h4M36 513.2h8M14 527.2h3" stroke="#d2a8ff" stroke-width="1.1" fill="none"/><path d="M37 27.2h9M48 27.2h10M60 27.2h11M73 27.2h13M24 31.2h4M34 31.2h9M27 37.2h4M46 37.2h11M78 41.2h3M37 43.2h3M39 45.2h3M38 47.2h3M29 49.2h4M26 55.2h4M72 55.2h4M25 61.2h14M29 63.2h3M40 71.2h10M21 79.2h9M34 83.2h9M11 85.2h6M31 95.2h9M42 95.2h7M24 99.2h4M34 99.2h9M78 105.2h3M35 107.2h3M37 109.2h3M36 111.2h3M37 113.2h3M25 117.2h4M11 131.2h5M25 145.2h11M38 145.2h7M13 149.2h7M22 155.2h7M20 185.2h7M32 197.2h6M13 203.2h7M18 337.2h7M28 349.2h6M11 355.2h7M27 467.2h11M40 467.2h7M7 473.2h7M16 481.2h7M16 495.2h7M14 523.2h7" stroke="#ffa657" stroke-width="1.1" fill="none"/><path d="M2 29.2h10M13 29.2h2M16 29.2h4M4 35.2h2M7 35.2h6M14 35.2h3M18 35.2h5M24 35.2h3M28 35.2h4M33 35.2h2M36 35.2h7M44 35.2h6M51 35.2h6M58 35.2h2M61 35.2h4M66 35.2h5M72 35.2h2M75 35.2h7M60 37.2h2M63 37.2h5M69 37.2h9M8 53.2h2M11 53.2h9M21 53.2h3M25 53.2h5M31 53.2h10M8 59.2h2M11 59.2h2M14 59.2h3M18 59.2h5M24 59.2h10M35 59.2h2M38 59.2h4M43 59.2h4M48 59.2h3M52 59.2h10M63 59.2h4M68 59.2h2M71 59.2h11M43 63.2h2M46 63.2h3M50 63.2h5M56 63.2h2M59 63.2h1M61 63.2h13M2 81.2h6M9 81.2h5M2 97.2h6M9 97.2h3M13 97.2h5M4 103.2h6M11 103.2h3M15 103.2h3M19 103.2h6M25 115.2h2M28 115.2h6M35 115.2h11M47 115.2h6M8 119.2h2M11 119.2h3M15 119.2h5M21 119.2h2M24 119.2h3M28 119.2h3M0 137.2h2M3 137.2h5M10 147.2h2M13 147.2h8M22 147.2h7M30 147.2h4M10 193.2h2M13 193.2h6M20 193.2h10M31 193.2h2M34 193.2h3M38 193.2h7M46 193.2h6M53 193.2h6M10 199.2h2M13 199.2h4M18 199.2h3M22 199.2h7M30 199.2h5M36 199.2h2M39 199.2h21M10 201.2h2M13 201.2h3M17 201.2h8M26 201.2h1M28 201.2h16M72 209.2h2M75 209.2h7M83 209.2h3M10 221.2h2M13 221.2h2M16 221.2h3M20 221.2h4M25 221.2h2M28 221.2h4M33 221.2h3M37 221.2h10M48 221.2h3M52 221.2h11M64 221.2h4M69 221.2h3M73 221.2h6M8 345.2h2M11 345.2h6M18 345.2h10M29 345.2h2M32 345.2h3M36 345.2h7M44 345.2h6M51 345.2h6M8 351.2h2M11 351.2h4M16 351.2h3M20 351.2h7M28 351.2h5M34 351.2h2M37 351.2h21M8 353.2h2M11 353.2h3M15 353.2h8M24 353.2h1M26 353.2h16M70 361.2h2M73 361.2h7M81 361.2h5M8 373.2h2M11 373.2h2M14 373.2h3M18 373.2h4M23 373.2h2M26 373.2h4M31 373.2h3M35 373.2h10M46 373.2h3M50 373.2h11M62 373.2h4M67 373.2h3M71 373.2h7M79 373.2h4M84 373.2h2M6 461.2h2M9 461.2h1M11 461.2h10M22 461.2h1M24 461.2h26M51 461.2h3M55 461.2h1M6 463.2h2M9 463.2h6M16 463.2h9M4 471.2h9M14 471.2h4M19 471.2h7M27 471.2h4M13 501.2h2M16 501.2h6" stroke="#8b949e" stroke-width="1.1" fill="none"/><path d="M7 1.2h6M27 1.2h1M7 3.2h5M25 3.2h1M7 5.2h5M25 5.2h1M7 7.2h4M23 7.2h1M7 9.2h2M7 11.2h4M23 11.2h1M36 27.2h1M46 27.2h1M58 27.2h1M71 27.2h1M16 31.2h1M28 31.2h1M33 31.2h1M43 31.2h1M44 31.2h1M25 37.2h1M31 37.2h1M45 37.2h1M57 37.2h1M58 37.2h1M9 41.2h1M14 41.2h1M16 41.2h1M19 41.2h1M26 41.2h1M27 41.2h6M33 41.2h1M34 41.2h5M39 41.2h1M46 41.2h1M47 41.2h6M53 41.2h1M54 41.2h6M60 41.2h1M71 41.2h1M72 41.2h1M73 41.2h1M75 41.2h1M76 41.2h1M81 41.2h1M83 41.2h1M18 43.2h1M24 43.2h1M25 43.2h6M31 43.2h1M32 43.2h4M36 43.2h1M41 43.2h1M44 43.2h1M45 43.2h1M20 45.2h1M26 45.2h1M27 45.2h6M33 45.2h1M34 45.2h4M38 45.2h1M43 45.2h1M46 45.2h1M47 45.2h1M19 47.2h1M25 47.2h1M26 47.2h6M32 47.2h1M33 47.2h4M37 47.2h1M42 47.2h1M45 47.2h1M46 47.2h1M27 49.2h1M33 49.2h1M43 49.2h1M47 49.2h1M54 49.2h1M60 49.2h1M65 49.2h1M66 49.2h1M24 55.2h1M30 55.2h1M40 55.2h1M41 55.2h1M43 55.2h1M44 55.2h1M49 55.2h1M51 55.2h1M52 55.2h1M59 55.2h1M61 55.2h1M62 55.2h1M69 55.2h1M70 55.2h1M76 55.2h1M11 61.2h1M12 61.2h9M22 61.2h1M23 61.2h1M39 61.2h1M41 61.2h1M16 63.2h1M17 63.2h6M23 63.2h1M24 63.2h4M28 63.2h1M33 63.2h1M36 63.2h1M38 63.2h1M41 63.2h1M8 65.2h1M4 67.2h1M5 67.2h1M6 67.2h1M15 71.2h1M28 71.2h1M39 71.2h1M50 71.2h1M51 71.2h1M11 73.2h6M0 75.2h1M20 79.2h1M30 79.2h1M32 79.2h1M16 83.2h1M18 83.2h2M20 83.2h1M33 83.2h1M43 83.2h1M44 83.2h1M17 85.2h1M22 85.2h1M28 85.2h1M29 85.2h1M38 85.2h1M47 85.2h1M48 85.2h1M2 87.2h1M30 95.2h1M40 95.2h1M50 95.2h1M52 95.2h1M53 95.2h1M54 95.2h1M56 95.2h1M16 99.2h1M28 99.2h1M33 99.2h1M43 99.2h1M44 99.2h1M19 101.2h1M28 101.2h1M29 101.2h1M30 101.2h1M9 105.2h1M14 105.2h1M16 105.2h1M19 105.2h1M26 105.2h1M27 105.2h6M33 105.2h1M34 105.2h5M39 105.2h1M46 105.2h1M47 105.2h6M53 105.2h1M54 105.2h6M60 105.2h1M71 105.2h1M72 105.2h1M73 105.2h1M75 105.2h1M76 105.2h1M81 105.2h1M83 105.2h1M16 107.2h1M22 107.2h1M23 107.2h6M29 107.2h1M30 107.2h4M34 107.2h1M39 107.2h1M42 107.2h1M43 107.2h1M18 109.2h1M24 109.2h1M25 109.2h6M31 109.2h1M32 109.2h4M36 109.2h1M41 109.2h1M44 109.2h1M45 109.2h1M17 111.2h1M23 111.2h1M24 111.2h6M30 111.2h1M31 111.2h4M35 111.2h1M40 111.2h1M43 111.2h1M44 111.2h1M18 113.2h1M24 113.2h1M25 113.2h6M31 113.2h1M32 113.2h4M36 113.2h1M41 113.2h1M44 113.2h1M45 113.2h1M9 115.2h1M16 115.2h1M17 115.2h1M18 115.2h1M21 115.2h1M23 115.2h1M23 117.2h1M29 117.2h1M39 117.2h1M43 117.2h1M50 117.2h1M56 117.2h1M63 117.2h1M64 117.2h1M8 121.2h8M16 121.2h1M20 121.2h1M21 121.2h8M29 121.2h1M30 121.2h1M6 123.2h1M4 125.2h1M5 125.2h1M6 125.2h1M16 131.2h1M21 131.2h1M22 131.2h8M30 131.2h1M31 131.2h1M2 133.2h1M20 143.2h1M22 143.2h1M24 145.2h1M36 145.2h1M46 145.2h1M48 145.2h1M49 145.2h1M50 145.2h1M52 145.2h1M12 149.2h1M20 149.2h1M21 149.2h10M31 149.2h1M33 149.2h1M18 151.2h1M21 151.2h1M27 153.2h1M29 153.2h1M30 153.2h1M31 153.2h1M17 155.2h1M18 155.2h1M20 155.2h1M29 155.2h1M30 155.2h10M40 155.2h1M42 155.2h1M33 157.2h1M45 157.2h1M46 157.2h1M47 157.2h1M27 159.2h1M29 159.2h12M41 159.2h1M42 159.2h6M48 159.2h1M29 161.2h1M37 161.2h6M43 161.2h1M52 161.2h1M53 161.2h1M16 163.2h5M21 163.2h1M33 163.2h1M16 165.2h6M22 165.2h1M14 183.2h1M15 183.2h1M18 183.2h1M14 185.2h4M18 185.2h1M27 185.2h1M28 185.2h4M33 185.2h1M34 185.2h1M47 185.2h1M14 187.2h1M15 187.2h1M16 187.2h1M14 189.2h10M24 189.2h1M29 189.2h1M30 189.2h8M38 189.2h1M24 195.2h1M32 195.2h5M37 195.2h1M41 195.2h1M42 195.2h8M50 195.2h1M51 195.2h4M55 195.2h1M57 195.2h1M58 195.2h1M59 195.2h3M62 195.2h1M64 195.2h1M66 195.2h12M78 195.2h1M30 197.2h1M38 197.2h1M43 197.2h1M44 197.2h3M47 197.2h1M48 197.2h4M52 197.2h1M53 197.2h1M12 203.2h1M20 203.2h1M21 203.2h4M25 203.2h1M27 203.2h1M44 205.2h1M46 205.2h7M53 205.2h1M57 205.2h1M58 205.2h1M59 205.2h1M30 207.2h1M32 207.2h4M36 207.2h1M41 207.2h1M42 207.2h23M65 207.2h1M75 207.2h1M76 207.2h1M29 209.2h1M70 209.2h1M25 211.2h1M26 211.2h9M35 211.2h1M36 211.2h1M48 211.2h1M49 211.2h1M50 211.2h1M60 211.2h1M61 211.2h1M62 211.2h1M72 211.2h1M76 211.2h1M77 211.2h1M84 211.2h1M85 211.2h1M10 213.2h1M32 215.2h1M45 215.2h1M46 215.2h9M55 215.2h1M56 215.2h1M68 215.2h1M69 215.2h1M70 215.2h1M80 215.2h1M81 215.2h1M82 215.2h1M28 217.2h1M30 217.2h15M45 217.2h1M54 217.2h1M63 217.2h1M64 217.2h1M29 223.2h1M69 223.2h1M23 225.2h1M31 225.2h12M43 225.2h1M44 225.2h4M48 225.2h1M49 225.2h11M60 225.2h1M67 225.2h1M68 225.2h1M14 227.2h10M24 227.2h1M29 227.2h1M14 229.2h5M19 229.2h1M29 229.2h1M14 231.2h11M25 231.2h1M28 231.2h1M14 233.2h8M22 233.2h1M24 233.2h1M16 235.2h1M18 237.2h4M22 237.2h1M30 237.2h1M18 239.2h7M25 239.2h1M27 239.2h1M20 241.2h1M22 241.2h4M26 241.2h1M34 241.2h1M36 241.2h4M40 241.2h1M20 245.2h1M22 245.2h4M26 245.2h1M39 245.2h1M41 245.2h9M50 245.2h1M52 245.2h1M54 245.2h3M57 245.2h1M59 245.2h12M71 245.2h1M73 245.2h6M79 245.2h1M18 249.2h1M19 249.2h1M16 251.2h1M17 251.2h1M14 253.2h1M15 253.2h1M14 255.2h15M29 255.2h1M31 255.2h1M16 257.2h4M20 257.2h1M14 259.2h1M15 259.2h1M12 261.2h1M13 261.2h1M14 261.2h1M14 269.2h1M15 269.2h11M26 269.2h1M28 269.2h1M30 269.2h7M37 269.2h1M38 269.2h3M34 271.2h1M42 271.2h12M54 271.2h1M55 271.2h4M59 271.2h1M60 271.2h11M71 271.2h1M78 271.2h1M79 271.2h1M14 273.2h5M19 273.2h1M36 273.2h1M14 275.2h8M22 275.2h1M24 275.2h1M25 275.2h1M27 275.2h4M31 275.2h1M41 275.2h1M43 275.2h7M50 275.2h1M55 275.2h1M56 275.2h1M14 277.2h11M25 277.2h1M30 277.2h1M14 279.2h8M22 279.2h1M24 279.2h1M16 281.2h1M18 283.2h4M22 283.2h1M30 283.2h1M18 285.2h7M25 285.2h1M27 285.2h1M20 287.2h1M22 287.2h4M26 287.2h1M34 287.2h1M36 287.2h4M40 287.2h1M42 287.2h6M48 287.2h1M49 287.2h7M56 287.2h1M58 287.2h1M59 287.2h1M60 287.2h7M67 287.2h1M68 287.2h7M76 287.2h1M18 289.2h1M19 289.2h1M16 291.2h1M17 291.2h1M14 293.2h1M15 293.2h1M12 295.2h1M13 295.2h1M14 295.2h1M12 297.2h1M19 303.2h1M21 303.2h8M29 303.2h1M31 303.2h15M46 303.2h1M47 303.2h7M54 303.2h1M56 303.2h1M57 303.2h1M58 303.2h7M65 303.2h1M72 303.2h1M74 303.2h12M10 305.2h1M8 307.2h1M15 307.2h1M29 309.2h1M41 309.2h1M42 309.2h1M43 309.2h1M23 311.2h1M25 311.2h12M37 311.2h1M38 311.2h6M44 311.2h1M25 313.2h1M33 313.2h6M39 313.2h1M48 313.2h1M49 313.2h1M12 315.2h5M17 315.2h1M29 315.2h1M12 317.2h6M18 317.2h1M12 335.2h1M13 335.2h1M16 335.2h1M12 337.2h4M16 337.2h1M25 337.2h1M26 337.2h4M31 337.2h1M32 337.2h1M45 337.2h1M10 339.2h1M11 339.2h1M12 339.2h1M10 341.2h7M17 341.2h1M21 341.2h1M22 341.2h8M30 341.2h1M20 347.2h1M28 347.2h5M33 347.2h1M37 347.2h1M38 347.2h8M46 347.2h1M47 347.2h4M51 347.2h1M53 347.2h1M54 347.2h1M55 347.2h3M58 347.2h1M60 347.2h1M62 347.2h12M74 347.2h1M26 349.2h1M34 349.2h1M39 349.2h1M40 349.2h3M43 349.2h1M44 349.2h4M48 349.2h1M49 349.2h1M10 355.2h1M18 355.2h1M19 355.2h4M23 355.2h1M25 355.2h1M42 357.2h1M44 357.2h7M51 357.2h1M55 357.2h1M56 357.2h1M57 357.2h1M28 359.2h1M30 359.2h4M34 359.2h1M39 359.2h1M40 359.2h23M63 359.2h1M73 359.2h1M74 359.2h1M27 361.2h1M68 361.2h1M23 363.2h1M24 363.2h9M33 363.2h1M34 363.2h1M46 363.2h1M47 363.2h1M48 363.2h1M58 363.2h1M59 363.2h1M60 363.2h1M70 363.2h1M74 363.2h1M75 363.2h1M82 363.2h1M83 363.2h3M8 365.2h1M30 367.2h1M43 367.2h1M44 367.2h9M53 367.2h1M54 367.2h1M66 367.2h1M67 367.2h1M68 367.2h1M78 367.2h1M79 367.2h1M80 367.2h1M26 369.2h1M28 369.2h15M43 369.2h1M52 369.2h1M61 369.2h1M62 369.2h1M27 375.2h1M67 375.2h1M21 377.2h1M29 377.2h12M41 377.2h1M42 377.2h4M46 377.2h1M47 377.2h11M58 377.2h1M65 377.2h1M66 377.2h1M12 379.2h10M22 379.2h1M27 379.2h1M12 381.2h5M17 381.2h1M27 381.2h1M12 383.2h11M23 383.2h1M26 383.2h1M12 385.2h8M20 385.2h1M22 385.2h1M14 387.2h1M16 389.2h4M20 389.2h1M28 389.2h1M16 391.2h7M23 391.2h1M25 391.2h1M18 393.2h1M20 393.2h4M24 393.2h1M32 393.2h1M34 393.2h4M38 393.2h1M18 397.2h1M20 397.2h4M24 397.2h1M37 397.2h1M39 397.2h9M48 397.2h1M50 397.2h1M52 397.2h3M55 397.2h1M57 397.2h12M69 397.2h1M71 397.2h6M77 397.2h1M16 401.2h1M17 401.2h1M14 403.2h1M15 403.2h1M14 405.2h1M15 405.2h1M14 407.2h15M29 407.2h1M31 407.2h1M16 409.2h4M20 409.2h1M14 411.2h1M15 411.2h1M12 413.2h1M13 413.2h1M14 413.2h1M12 421.2h1M13 421.2h11M24 421.2h1M26 421.2h1M28 421.2h7M35 421.2h1M36 421.2h3M32 423.2h1M40 423.2h12M52 423.2h1M53 423.2h4M57 423.2h1M58 423.2h11M69 423.2h1M76 423.2h1M77 423.2h1M12 425.2h5M17 425.2h1M34 425.2h1M12 427.2h8M20 427.2h1M22 427.2h1M23 427.2h1M25 427.2h4M29 427.2h1M39 427.2h1M41 427.2h7M48 427.2h1M53 427.2h1M54 427.2h1M12 429.2h11M23 429.2h1M28 429.2h1M12 431.2h8M20 431.2h1M22 431.2h1M14 433.2h1M16 435.2h4M20 435.2h1M28 435.2h1M12 437.2h7M19 437.2h1M21 437.2h1M14 439.2h1M16 439.2h4M20 439.2h1M28 439.2h1M30 439.2h4M34 439.2h1M36 439.2h6M42 439.2h1M43 439.2h7M50 439.2h1M52 439.2h1M53 439.2h1M54 439.2h7M61 439.2h1M62 439.2h7M70 439.2h1M12 441.2h1M13 441.2h1M10 443.2h1M11 443.2h1M8 445.2h1M9 445.2h1M6 447.2h1M7 447.2h1M8 447.2h1M6 449.2h1M13 455.2h1M15 455.2h8M23 455.2h1M25 455.2h15M40 455.2h1M41 455.2h7M48 455.2h1M50 455.2h1M51 455.2h1M52 455.2h7M59 455.2h1M66 455.2h1M68 455.2h12M80 455.2h1M82 455.2h4M4 457.2h1M2 459.2h1M3 459.2h1M2 465.2h1M3 465.2h1M26 467.2h1M38 467.2h1M47 467.2h1M49 467.2h1M19 469.2h1M21 469.2h12M33 469.2h1M34 469.2h6M40 469.2h1M6 473.2h1M14 473.2h1M15 473.2h10M25 473.2h1M27 473.2h1M12 475.2h1M15 475.2h1M6 479.2h10M17 479.2h1M19 479.2h1M20 479.2h1M21 479.2h1M11 481.2h1M12 481.2h1M14 481.2h1M23 481.2h1M24 481.2h10M34 481.2h1M36 481.2h1M21 485.2h1M29 485.2h6M35 485.2h1M44 485.2h1M45 485.2h1M10 487.2h5M15 487.2h1M27 487.2h1M10 489.2h6M16 489.2h1M10 493.2h1M11 493.2h1M14 493.2h1M10 495.2h4M14 495.2h1M23 495.2h1M24 495.2h4M29 495.2h1M30 495.2h1M43 495.2h1M8 497.2h1M9 497.2h1M10 497.2h1M8 499.2h10M18 499.2h1M23 499.2h1M24 499.2h8M32 499.2h1M8 501.2h1M9 501.2h1M10 501.2h1M11 501.2h1M6 503.2h1M13 507.2h10M4 511.2h1M11 511.2h1M21 513.2h1M29 513.2h6M35 513.2h1M44 513.2h1M45 513.2h1M8 515.2h5M13 515.2h1M25 515.2h1M8 517.2h6M14 517.2h1M8 521.2h1M9 521.2h1M12 521.2h1M8 523.2h4M12 523.2h1M21 523.2h1M22 523.2h4M27 523.2h1M28 523.2h1M41 523.2h1M6 525.2h1M7 525.2h1M8 525.2h1M6 527.2h7M13 527.2h1M17 527.2h1M18 527.2h8M26 527.2h1M13 529.2h8M4 531.2h1M2 533.2h1M0 535.2h1" stroke="#d0d7de" stroke-width="1.1" fill="none"/></svg>
<div class="abs" style="left:772px;top:0;width:1px;height:606px;background:#21262d"></div>
<div class="abs" style="left:772px;top:0;width:14px;height:66px;background:#6e7681;opacity:.3"></div>
<div class="abs" style="left:773px;top:14px;width:13px;height:2px;background:#2f6fd8"></div>
</div>
<div class="abs" style="left:1134px;top:35px;width:1px;height:663px;background:#30363d"></div>
<div id="wtabs" class="abs"><div id="wtab" class="abs">
<svg class="abs" style="left:15px;top:10px" width="14" height="14" viewBox="0 0 14 14" ><path d="M2 3.2h8M2 5.9h5M2 8.6h8M2 11.3h5.5" stroke="#9aa2ab" stroke-width="1.5" fill="none" stroke-linecap="round" stroke-linejoin="round" /></svg>
<span class="abs" style="left:31px;top:9px;font-size:13px;letter-spacing:.42px;color:#9198a1;white-space:pre">Dev-Docs</span>
<svg class="abs" style="left:97.5px;top:9.5px" width="15" height="15" viewBox="0 0 16 16" ><path d="M4.1 4.1L11.9 11.9M11.9 4.1L4.1 11.9" stroke="#6e7681" stroke-width="1" fill="none" stroke-linecap="round" stroke-linejoin="round" /></svg>
</div>
<svg class="abs" style="left:754px;top:10px" width="16" height="16" viewBox="0 0 16 16" ><circle cx="3.5" cy="8" r="1" fill="#8b949e"/><circle cx="8" cy="8" r="1" fill="#8b949e"/><circle cx="12.5" cy="8" r="1" fill="#8b949e"/></svg>
</div>
<div id="wv" class="abs">
<div class="btn" style="left:27px;top:40px;width:46px"></div>
<svg class="abs" style="left:43px;top:49px" width="14" height="14" viewBox="0 0 14 14" ><path d="M2 3.5h10M2 7h7M2 10.5h10" stroke="#e6edf3" stroke-width="1.6" fill="none" stroke-linecap="round" stroke-linejoin="round" /><path d="M10 5l2.5 2-2.5 2z" fill="#e6edf3"/></svg>
<div class="btn" style="left:85px;top:40px;width:46px"></div>
<svg class="abs" style="left:100px;top:48px" width="16" height="16" viewBox="0 0 16 16" ><path d="M8 2.5a5.5 5.5 0 1 1-2.9 10.2L2.5 13.5l.9-2.6A5.5 5.5 0 0 1 8 2.5z" stroke="#e6edf3" fill="none" stroke-width="1.1"/></svg>
<svg class="abs" style="left:174px;top:28px" width="22" height="22" viewBox="0 0 22 22" ><rect x="0" y="6" width="2.4" height="5.8" rx=".6" fill="#3d6b85"/><rect x="18" y="6" width="2.4" height="5.8" rx=".6" fill="#3d6b85"/><rect x="2" y=".75" width="16.3" height="15.7" rx="2.6" fill="#7a55f7"/><rect x="3.7" y="2.4" width="12.7" height="11.5" rx="1.6" fill="#dfe8fb"/><rect x="3.7" y="2.4" width="2" height="11.5" rx="1" fill="#a9dff5" opacity=".7"/><circle cx="6.4" cy="8.9" r="1.1" fill="none" stroke="#b9a6fb" stroke-width=".7"/><circle cx="13.6" cy="8.9" r="1.1" fill="none" stroke="#b9a6fb" stroke-width=".7"/><path d="M9.4 11.4h1.4" stroke="#a58df9" stroke-width=".8"/><path d="M8.7 16.3h2.9l.5 1.8c1.6.2 3 .8 3.1 1.8H5.6c.1-1 1.5-1.6 3.1-1.8z" fill="#7360fa"/></svg>
<div class="abs" style="left:167px;top:49px;width:37px;text-align:center;font-size:8.5px;font-weight:bold;color:#6b5cff;letter-spacing:-.45px;white-space:pre">Dev-Docs</div>
<div class="abs" style="left:315px;top:42px;font-size:27px;letter-spacing:-.78px;-webkit-text-stroke:.5px #e6edf3;color:#e6edf3;white-space:pre;line-height:32px">index.js</div>
<div class="abs" style="left:409px;top:44px;width:60px;height:24px;background:#000;border:1px solid #1b2735;border-radius:4px;font-size:12px;line-height:22px;text-align:center;color:#f0f0f0">context</div>
<div class="btn" style="left:617px;top:40px;width:46px"></div>
<svg class="abs" style="left:632px;top:48px" width="16" height="16" viewBox="0 0 16 16" ><circle cx="7.5" cy="7.5" r="5" stroke="#e6edf3" fill="none" stroke-width="1.2"/><path d="M11.3 11.3L13 13" stroke="#e6edf3" stroke-width="1.2" fill="none" stroke-linecap="round" stroke-linejoin="round" /></svg>
<div class="btn" style="left:663px;top:40px;width:46px"></div>
<svg class="abs" style="left:679px;top:49px" width="14" height="14" viewBox="0 0 14 14" ><path d="M2 3.5h10M2 7h7M2 10.5h10" stroke="#e6edf3" stroke-width="1.6" fill="none" stroke-linecap="round" stroke-linejoin="round" /><path d="M10 5l2.5 2-2.5 2z" fill="#e6edf3"/></svg>
<div class="abs" style="left:712px;top:35px;width:42px;height:42px;border-radius:21px;background:#5f27d8"></div>
<div class="abs" style="left:716px;top:39px;width:34px;height:34px;border-radius:17px;background:#1c1c24"></div>
<div class="abs" style="left:717px;top:40px;width:32px;height:32px;border-radius:16px;background:linear-gradient(90deg,#6b2a80,#3aa899)"></div>
<div class="abs" style="left:744px;top:34px;width:11px;height:11px;border-radius:6px;background:#1c1c24"></div>
<div class="abs" style="left:746px;top:36px;width:7px;height:7px;border-radius:4px;background:#34d399"></div>
<div id="card" class="abs">
<div class="body" style="top:92px;letter-spacing:-.8px">---</div>
<div style="top:140.6px;font-size:37px;line-height:44px;letter-spacing:-.87px;-webkit-text-stroke:.7px #fff;color:#fff">removeBackgroundColor /index.js</div>
<div style="top:197.1px;font-size:24px;line-height:32px;letter-spacing:-.97px;-webkit-text-stroke:.45px #fff;color:#fff">Imported Code Object</div>
<div class="body" style="top:244px"><b style="letter-spacing:-.45px">Last Updated at:</b><span style="letter-spacing:.1px"> 6/25/2024, 5:44:22 PM</span></div>
<div class="body" style="top:286px">The `removeBackgroundColor` function is an asynchronous function that takes an input image path (`inputPath`),</div>
<div class="body" style="top:307px">an output image path (`outputPath`), a target color (`targetColor`) to be removed, an optional color threshold</div>
<div class="body" style="top:328px;letter-spacing:.023px">(`colorThreshold`), and an optional options object (`options`). Its purpose is to remove a specific background color</div>
<div class="body" style="top:349px">from an image and save the result to the specified output path.</div>
<div class="body" style="top:391px">Here&#x27;s a breakdown of what the function does:</div>
<div class="body" style="top:433px">1. It reads the input image using the `Jimp.read` function, which returns a Promise that resolves with the loaded</div>
<div class="body" style="top:454px">image.</div>
<div class="body" style="top:475px;letter-spacing:-.062px">2. It converts the `targetColor` string (e.g., &quot;white&quot;, &quot;blue&quot;, &quot;yellow&quot;) to a hexadecimal color code using the</div>
<div class="body" style="top:496px">`Jimp.cssColorToHex` function.</div>
</div>
</div>
<div id="panel" class="abs">
<span class="pt" style="left:20px;">PROBLEMS</span>
<span class="pt" style="left:104px;color:#e6edf3;">OUTPUT</span>
<span class="pt" style="left:174px;">DEBUG CONSOLE</span>
<span class="pt" style="left:293px;">TERMINAL</span>
<span class="pt" style="left:372px;">PORTS</span>
<span class="pt" style="left:433px;">COMMENTS</span>
<div class="abs" style="left:102px;top:28px;width:50px;height:1px;background:#f78166"></div>
<div class="abs" style="left:1260px;top:8px;width:170px;height:19px;background:#161b22;border:1px solid #30363d;border-radius:5px"></div>
<span class="abs" style="left:1269px;top:11px;font-size:12px;letter-spacing:-.4px;color:#e6edf3;line-height:15px">Tasks</span>
<svg class="abs" style="left:1408px;top:10px" width="16" height="16" viewBox="0 0 16 16" ><path d="M3.5 6L8 10.5L12.5 6" stroke="#e6edf3" stroke-width="1.3" fill="none" stroke-linecap="round" stroke-linejoin="round" /></svg>
<svg class="abs" style="left:1437px;top:10px" width="16" height="16" viewBox="0 0 16 16" ><path d="M1.5 3.5h12M1.5 6.5h12M1.5 9.5h7M1.5 12.5h7M10.5 10l3 3M13.5 10l-3 3" stroke="#8b949e" stroke-width="1" fill="none" stroke-linecap="round" stroke-linejoin="round" /></svg>
<svg class="abs" style="left:1463px;top:9px" width="16" height="16" viewBox="0 0 16 16" ><rect x="2.8" y="8.7" width="10.7" height="6.8" rx="1" stroke="#8b949e" fill="none" stroke-width="1.1"/><path d="M4.9 8.7V5.8a3.3 3.3 0 0 1 6.6 0v2.9" stroke="#8b949e" stroke-width="1.1" fill="none" stroke-linecap="round" stroke-linejoin="round" /></svg>
<svg class="abs" style="left:1489px;top:10px" width="16" height="16" viewBox="0 0 16 16" ><circle cx="3.5" cy="8" r="1" fill="#8b949e"/><circle cx="8" cy="8" r="1" fill="#8b949e"/><circle cx="12.5" cy="8" r="1" fill="#8b949e"/></svg>
<svg class="abs" style="left:1515px;top:10px" width="16" height="16" viewBox="0 0 16 16" ><path d="M3.5 10L8 5.5L12.5 10" stroke="#8b949e" stroke-width="1.1" fill="none" stroke-linecap="round" stroke-linejoin="round" /></svg>
<svg class="abs" style="left:1541px;top:9px" width="16" height="16" viewBox="0 0 16 16" ><path d="M4.2 4.2L11.8 11.8M11.8 4.2L4.2 11.8" stroke="#8b949e" stroke-width="1" fill="none" stroke-linecap="round" stroke-linejoin="round" /></svg>
<div class="abs" style="left:1559px;top:34px;width:13px;height:2px;background:#2563d0"></div>
<div class="abs" style="left:1111px;top:305px;width:450px;height:42px;background:#161b22;border-radius:4px"></div>
<svg class="abs" style="left:1120px;top:317px" width="18" height="18" viewBox="0 0 18 18" ><circle cx="9" cy="9" r="7.5" stroke="#388bfd" fill="none" stroke-width="1.2"/><rect x="8.3" y="7.8" width="1.4" height="5" fill="#388bfd"/><rect x="8.3" y="5" width="1.4" height="1.5" fill="#388bfd"/></svg>
<svg class="abs" style="left:1142px;top:318px" width="16" height="16" viewBox="0 0 16 16" ><rect x="7.3" y="0.5" width="1.4" height="2.5" fill="#9aa5b1"/><circle cx="8" cy=".9" r="1" fill="#e5534b"/><rect x="2.5" y="3" width="11" height="10.5" rx="2" fill="#8fb8c9"/><rect x="0.8" y="6" width="1.7" height="4" rx=".5" fill="#6b8a99"/><rect x="13.5" y="6" width="1.7" height="4" rx=".5" fill="#6b8a99"/><circle cx="5.7" cy="7" r="1.5" fill="#fff"/><circle cx="10.3" cy="7" r="1.5" fill="#fff"/><circle cx="5.7" cy="7" r=".7" fill="#2b6cb0"/><circle cx="10.3" cy="7" r=".7" fill="#2b6cb0"/><rect x="5" y="10" width="6" height="2" fill="#e5534b"/></svg>
<span class="abs" style="left:1161px;top:318px;font-size:13px;letter-spacing:.27px;color:#e6edf3;line-height:18px;white-space:pre">Generating Docs for /index.js</span>
</div>
<div id="status" class="abs">
<div id="remote" class="abs"></div>
<svg class="abs" style="left:0px;top:-1px" width="32" height="22" viewBox="0 0 32 22" ><path d="M12.8 10.2L17 13L12.8 15.8M21 5L17.8 8L21 11" stroke="#d0d7de" stroke-width="1" fill="none" stroke-linecap="round" stroke-linejoin="round" /></svg>
<span class="t" style="left:27.5px;color:#e6edf3;letter-spacing:.32px">Codespaces: psychic umbrella</span>
<svg class="abs" style="left:214px;top:0px" width="16" height="20" viewBox="0 0 16 20" ><circle cx="5.5" cy="4.9" r="1.7" stroke="#7d8590" fill="none"/><circle cx="5.5" cy="14.9" r="1.7" stroke="#7d8590" fill="none"/><circle cx="11.4" cy="7.7" r="1.7" stroke="#7d8590" fill="none"/><path d="M5.5 6.6V13.2M11.4 9.4c0 2-2 2.4-5.9 2.4" stroke="#7d8590" stroke-width="1" fill="none" stroke-linecap="round" stroke-linejoin="round" /></svg>
<span class="t" style="left:233px;letter-spacing:.3px">main*</span>
<svg class="abs" style="left:271px;top:3px" width="16" height="15" viewBox="0 0 16 15" ><path d="M3.6 7.2a4.4 4.4 0 0 1 8.1-2.2M10.4 6.2l2 1.9 1.7-2.2M12.2 8a4.4 4.4 0 0 1-8.1 2.2M5.4 9l-2-1.9-1.7 2.2" stroke="#7d8590" stroke-width="1" fill="none" stroke-linecap="round" stroke-linejoin="round" /></svg>
<svg class="abs" style="left:299px;top:3px" width="14" height="14" viewBox="0 0 14 14" ><circle cx="7" cy="7" r="5.5" stroke="#7d8590" fill="none"/><path d="M5 5l4 4M9 5l-4 4" stroke="#7d8590" stroke-width="1" fill="none" stroke-linecap="round" stroke-linejoin="round" /></svg>
<span class="t" style="left:317px">0</span>
<svg class="abs" style="left:328px;top:3px" width="14" height="14" viewBox="0 0 14 14" ><path d="M7 1.8L13 12.2H1z" stroke="#7d8590" stroke-width="1" fill="none" stroke-linecap="round" stroke-linejoin="round" /><path d="M7 5.5v3.5M7 10.5v.5" stroke="#7d8590" stroke-width="1" fill="none" stroke-linecap="round" stroke-linejoin="round" /></svg>
<span class="t" style="left:346px">0</span>
<svg class="abs" style="left:369px;top:3px" width="14" height="14" viewBox="0 0 14 14" ><path d="M7 6L4.5 13M7 6l2.5 7M5.5 10.5h3M4.3 3.5a3.5 3.5 0 0 0 0 5M9.7 3.5a3.5 3.5 0 0 1 0 5M2.5 2a6 6 0 0 0 0 8M11.5 2a6 6 0 0 1 0 8" stroke="#7d8590" stroke-width="1" fill="none" stroke-linecap="round" stroke-linejoin="round" /></svg>
<span class="t" style="left:387px">0</span>
<span class="t" style="left:1484.5px;letter-spacing:.18px">Ln 9, Col 1</span>
<span class="t" style="left:1561.5px;letter-spacing:.18px">Spaces: 2</span>
<span class="t" style="left:1633px;letter-spacing:.3px">UTF-8</span>
<span class="t" style="left:1685.5px">LF</span>
<span class="t" style="left:1714px;letter-spacing:2.5px">{}</span>
<span class="t" style="left:1733.5px;letter-spacing:.27px">JavaScript</span>
<span class="t" style="left:1806.5px;letter-spacing:.15px">Layout: U.S.</span>
<svg class="abs" style="left:1890px;top:2px" width="16" height="16" viewBox="0 0 16 16" ><path d="M3.5 11.5c1-1 1.3-2 1.3-4.2a3.2 3.2 0 0 1 6.4 0c0 2.2.3 3.2 1.3 4.2zM7 13a1 1 0 0 0 2 0" stroke="#7d8590" stroke-width="1" fill="none" stroke-linecap="round" stroke-linejoin="round" /><circle cx="11.6" cy="4.4" r="2.7" fill="#0d1117"/><circle cx="11.6" cy="4.4" r="2.1" fill="#7d8590"/></svg>
</div>
</div></body></html>
